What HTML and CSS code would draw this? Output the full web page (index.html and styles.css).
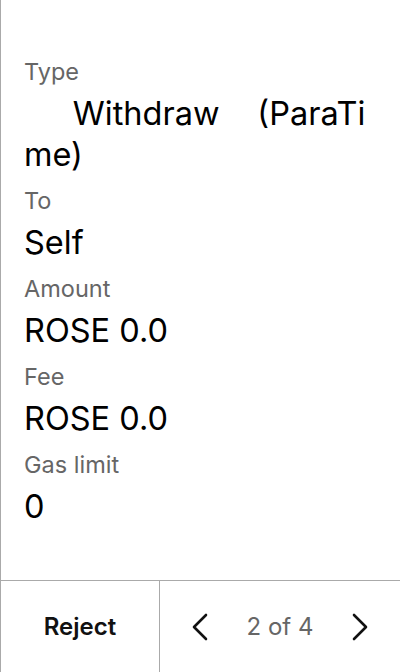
FILE: index.html
```html
<!DOCTYPE html>
<html lang="en">
<head>
<meta charset="utf-8">
<link rel="stylesheet" href="styles.css">
</head>
<body>
<div class="screen">
  <div class="details">
    <div class="field">
      <div class="label">Type</div>
      <div class="value value-pre">&ensp;&ensp;&ensp;Withdraw&ensp;&ensp;&#8198;(ParaTime)</div>
    </div>
    <div class="field">
      <div class="label">To</div>
      <div class="value">Self</div>
    </div>
    <div class="field">
      <div class="label">Amount</div>
      <div class="value">ROSE 0.0</div>
    </div>
    <div class="field">
      <div class="label">Fee</div>
      <div class="value">ROSE 0.0</div>
    </div>
    <div class="field">
      <div class="label">Gas limit</div>
      <div class="value">0</div>
    </div>
  </div>
  <div class="footer">
    <button class="reject">Reject</button>
    <div class="pager">
      <svg class="chev" width="20" height="28" viewBox="0 0 20 28"><path d="M16 2 L4 14 L16 26" fill="none" stroke="#111" stroke-width="2.6" stroke-linecap="round" stroke-linejoin="round"/></svg>
      <span class="count">2 of 4</span>
      <svg class="chev" width="20" height="28" viewBox="0 0 20 28"><path d="M4 2 L16 14 L4 26" fill="none" stroke="#111" stroke-width="2.6" stroke-linecap="round" stroke-linejoin="round"/></svg>
    </div>
  </div>
</div>
</body>
</html>
```
FILE: styles.css
```css
* { box-sizing: border-box; }
html, body { margin: 0; padding: 0; background: #fff; }
body { font-family: Inter, "Noto Sans", sans-serif; color: #000; }
.screen {
  width: 400px;
  height: 672px;
  border-left: 1px solid #aaa;
  display: flex;
  flex-direction: column;
}
.details {
  flex: 1;
  padding: 57px 24px 0 23px;
  display: flex;
  flex-direction: column;
  gap: 11px;
}
.label {
  font-size: 23.5px;
  line-height: 30px;
  color: #666;
  margin-bottom: 6px;
}
.value {
  font-size: 32.5px;
  line-height: 41px;
  color: #000;
}
.value-pre {
  white-space: pre-wrap;
  word-break: break-all;
}
.footer {
  height: 92px;
  border-top: 1px solid #aaa;
  display: grid;
  grid-template-columns: 159px 1fr;
}
.reject {
  border: 0;
  border-right: 1px solid #aaa;
  background: #fff;
  font-family: Inter, sans-serif;
  font-size: 24px;
  font-weight: 600;
  color: #111;
  padding: 0;
}
.pager {
  display: flex;
  align-items: center;
  justify-content: space-between;
  padding: 0 30px;
}
.count {
  font-size: 24px;
  color: #666;
}
```
